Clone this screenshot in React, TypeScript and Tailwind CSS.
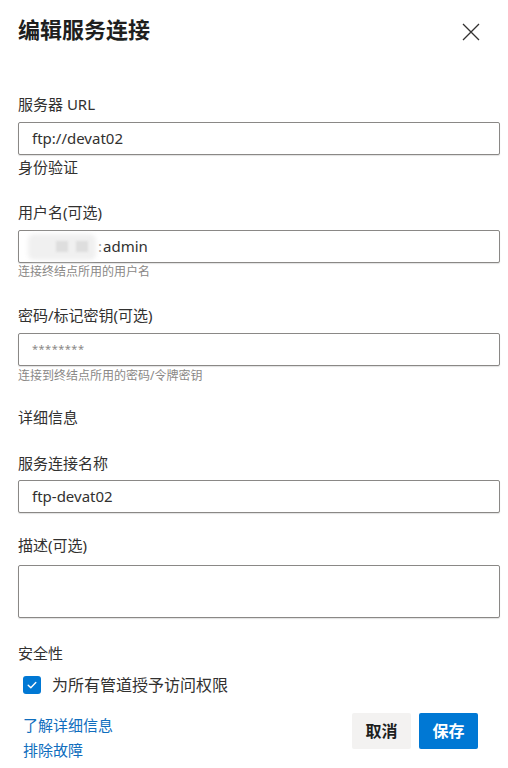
import React from "react";

const font = { fontFamily: '"Noto Sans", "Noto Sans CJK SC", sans-serif' };

function Label({ children, className = "" }: { children: React.ReactNode; className?: string }) {
  return <div className={`text-[15px] leading-[20px] text-[#323130] ${className}`}>{children}</div>;
}

function Helper({ children, className = "" }: { children: React.ReactNode; className?: string }) {
  return <div className={`text-[12px] leading-[16px] text-[#8a8886] ${className}`}>{children}</div>;
}

function Field({ children, className = "" }: { children?: React.ReactNode; className?: string }) {
  return (
    <div
      className={`flex items-center rounded-[2px] border border-[#8a8886] bg-white pl-[13px] text-[15px] text-[#323130] shadow-[0_1px_1px_rgba(0,0,0,0.12)] ${className}`}
    >
      {children}
    </div>
  );
}

export default function App() {
  return (
    <div className="h-[768px] w-[508px] overflow-hidden bg-white pl-[18px] pr-[8px]" style={font}>
      <div className="flex items-start justify-between pt-[14px]">
        <div className="text-[22px] font-bold leading-[30px] text-[#201f1e]">编辑服务连接</div>
        <svg className="mr-[20px] mt-[9px]" width="18" height="18" viewBox="0 0 18 18">
          <path d="M1 1 L17 17 M17 1 L1 17" stroke="#323130" strokeWidth="1.3" fill="none" />
        </svg>
      </div>

      <Label className="mt-[50px]">服务器 URL</Label>
      <Field className="mt-[8px] h-[33px]">ftp://devat02</Field>
      <Label className="mt-[2px]">身份验证</Label>

      <Label className="mt-[25px]">用户名(可选)</Label>
      <Field className="mt-[8px] h-[33px]">
        <span className="relative inline-block h-[20px] w-[64px]">
          <span className="absolute left-[-4px] top-[-3px] h-[26px] w-[68px] rounded-[6px] bg-[#f0f0f0] blur-[2px]" />
          <span className="absolute left-[24px] top-[4px] h-[11px] w-[12px] bg-[#dedede] blur-[1px]" />
          <span className="absolute left-[44px] top-[4px] h-[11px] w-[12px] bg-[#dedede] blur-[1px]" />
        </span>
        <span className="ml-[2px] text-[#9a9a9a]">:</span>
        <span className="ml-[1px]">admin</span>
      </Field>
      <Helper className="mt-[1px]">连接终结点所用的用户名</Helper>

      <Label className="mt-[25px]">密码/标记密钥(可选)</Label>
      <Field className="mt-[8px] h-[33px]">
        <span className="text-[11px] tracking-[0.5px] text-[#8a8886]">********</span>
      </Field>
      <Helper className="mt-[2px]">连接到终结点所用的密码/令牌密钥</Helper>

      <Label className="mt-[23px]">详细信息</Label>

      <Label className="mt-[26px]">服务连接名称</Label>
      <Field className="mt-[7px] h-[33px]">ftp-devat02</Field>

      <Label className="mt-[22px]">描述(可选)</Label>
      <Field className="mt-[10px] h-[53px]" />

      <Label className="mt-[25px]">安全性</Label>
      <div className="mt-[12px] flex h-[20px] items-center pl-[5px]">
        <div className="flex h-[18px] w-[18px] items-center justify-center rounded-[3px] bg-[#0078d4]">
          <svg width="12" height="12" viewBox="0 0 12 12">
            <path d="M2.2 6.3 L4.8 8.8 L9.8 3.6" stroke="white" strokeWidth="1.4" fill="none" strokeLinecap="round" strokeLinejoin="round" />
          </svg>
        </div>
        <span className="ml-[11px] text-[16px] leading-[20px] text-[#323130]">为所有管道授予访问权限</span>
      </div>

      <div className="mt-[18px] flex items-start justify-between pr-[22px]">
        <div className="flex flex-col pl-[5px] text-[15px] leading-[20px] text-[#106ebe]">
          <span className="mt-[2px]">了解详细信息</span>
          <span className="mt-[5px]">排除故障</span>
        </div>
        <div className="flex gap-[8px]">
          <button className="h-[36px] w-[59px] rounded-[2px] bg-[#f3f2f1] text-[16px] font-bold text-[#201f1e]">取消</button>
          <button className="h-[36px] w-[59px] rounded-[2px] bg-[#0078d4] text-[16px] font-bold text-white">保存</button>
        </div>
      </div>
    </div>
  );
}
